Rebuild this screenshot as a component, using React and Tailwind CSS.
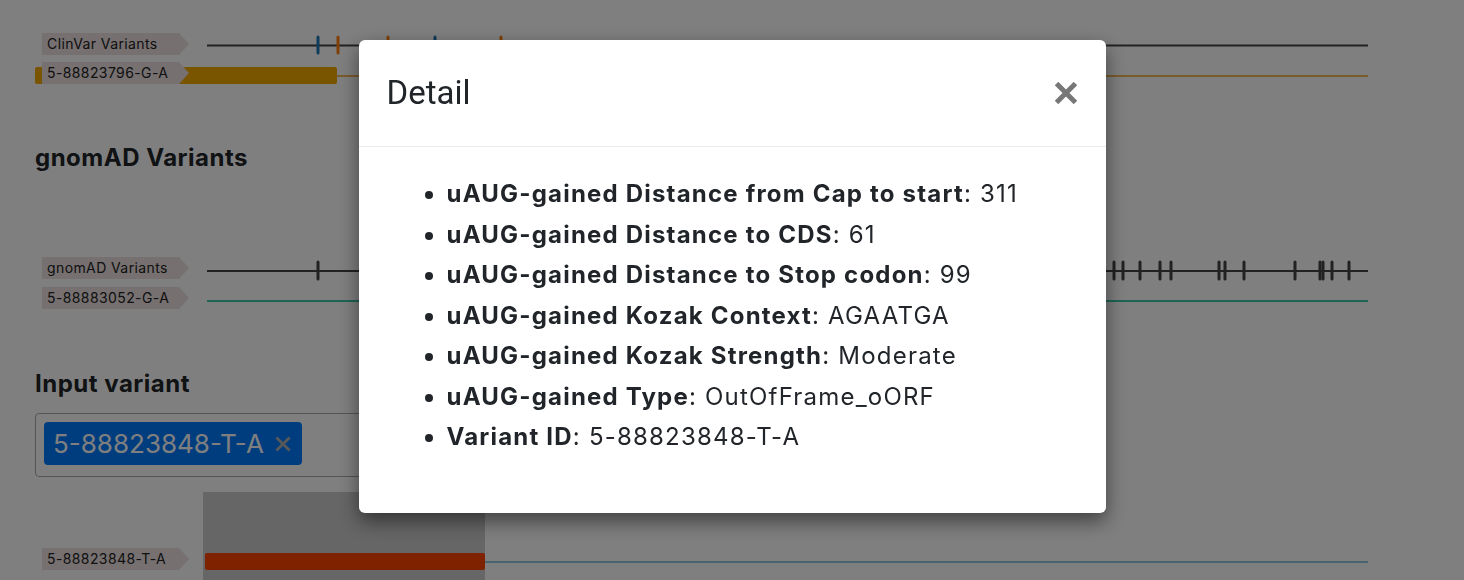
import React from 'react';

const tagShape = '[clip-path:polygon(0_0,calc(100%-10px)_0,100%_50%,calc(100%-10px)_100%,0_100%)]';

const Tag = ({ children, className }) => (
  <div className={`absolute left-[7px] w-[147px] h-[22px] bg-[#ece0e0] pl-[5px] text-[14px] tracking-[0.4px] leading-[22px] text-[#222] ${tagShape} ${className}`}>
    {children}
  </div>
);

const Tick = ({ x, y1, y2, color }) => (
  <line x1={x} x2={x} y1={y1} y2={y2} stroke={color} strokeWidth="3" strokeLinecap="round" />
);

const gnomadTicks = [283, 1079, 1088, 1105, 1125, 1136, 1184, 1190, 1209, 1260, 1285, 1288, 1297, 1314];

const details = [
  ['uAUG-gained Distance from Cap to start', '311'],
  ['uAUG-gained Distance to CDS', '61'],
  ['uAUG-gained Distance to Stop codon', '99'],
  ['uAUG-gained Kozak Context', 'AGAATGA'],
  ['uAUG-gained Kozak Strength', 'Moderate'],
  ['uAUG-gained Type', 'OutOfFrame_oORF'],
  ['Variant ID', '5-88823848-T-A'],
];

const XMark = ({ size, stroke, color }) => (
  <svg width={size} height={size} viewBox="0 0 20 20">
    <path d="M3 3 L17 17 M17 3 L3 17" stroke={color} strokeWidth={stroke} strokeLinecap="square" />
  </svg>
);

export default function App() {
  return (
    <div className="relative h-[580px] w-full overflow-hidden bg-white font-['Inter',sans-serif] text-[#212529]">
      <div className="pl-[35px]">
        {/* ClinVar track */}
        <div className="relative mt-[30px] h-[60px]">
          <svg width="1333" height="60" className="block">
            <line x1="172" x2="1333" y1="15.5" y2="15.5" stroke="#444" strokeWidth="2" />
            <Tick x={283} y1={7} y2={23} color="#1f77b4" />
            <Tick x={303} y1={7} y2={23} color="#ff7f0e" />
            <Tick x={353} y1={7} y2={23} color="#ff7f0e" />
            <Tick x={400} y1={7} y2={23} color="#1f77b4" />
            <Tick x={466} y1={7} y2={23} color="#ff7f0e" />
            <rect x="0" y="37" width="302" height="17" rx="2" fill="#f5aa00" />
            <line x1="302" x2="1333" y1="46" y2="46" stroke="#f0a020" strokeWidth="1.5" />
          </svg>
          <Tag className="top-[3px]">ClinVar Variants</Tag>
          <Tag className="top-[32px]">5-88823796-G-A</Tag>
        </div>

        <h2 className="mt-[53px] text-[24px] font-bold leading-[29px] tracking-[0.5px]">gnomAD Variants</h2>

        {/* gnomAD track */}
        <div className="relative mt-[78px] h-[66px]">
          <svg width="1333" height="66" className="block">
            <line x1="172" x2="1333" y1="21" y2="21" stroke="#444" strokeWidth="2" />
            {gnomadTicks.map(x => <Tick key={x} x={x} y1={12} y2={29} color="#444" />)}
            <line x1="172" x2="1333" y1="51" y2="51" stroke="#3cc8a8" strokeWidth="2" />
          </svg>
          <Tag className="top-[7px]">gnomAD Variants</Tag>
          <Tag className="top-[37px]">5-88883052-G-A</Tag>
        </div>

        <h2 className="mt-[53px] text-[24px] font-bold leading-[29px] tracking-[0.5px]">Input variant</h2>

        <div className="mt-[15px] flex h-[64px] w-[1000px] items-start rounded-[4px] border border-[#aaa] p-[8px]">
          <div className="flex h-[43px] w-[258px] items-center gap-[11px] rounded-[4px] bg-[#007bff] pl-[9px] text-[26px] text-white">
            <span>5-88823848-T-A</span>
            <XMark size={16} stroke={3.5} color="#b0b0b0" />
          </div>
        </div>

        {/* input variant track */}
        <div className="relative mt-[15px] h-[100px]">
          <svg width="1333" height="100" className="block">
            <rect x="168" y="0" width="282" height="100" fill="#ccc" />
            <rect x="170" y="61" width="280" height="17" rx="2" fill="#ff4400" />
            <line x1="450" x2="1333" y1="70" y2="70" stroke="#6ab8d8" strokeWidth="1.5" />
          </svg>
          <Tag className="top-[56px]">5-88823848-T-A</Tag>
        </div>
      </div>

      {/* modal */}
      <div className="fixed inset-0 flex justify-center bg-black/50">
        <div className="mt-[40px] h-fit w-[747px] rounded-[6px] bg-white shadow-[0_8px_20px_rgba(0,0,0,0.5)]">
          <div className="flex h-[107px] items-center justify-between border-b border-[#e9ecef] pl-[28px] pr-[29px]">
            <h4 className="font-['Roboto',sans-serif] text-[33px] font-normal text-[#212529]">Detail</h4>
            <XMark size={22} stroke={4.5} color="#777" />
          </div>
          <div className="pb-[55px] pl-[48px] pt-[27px]">
            <ul className="list-disc pl-[40px] text-[24px] leading-[40.5px] tracking-[1.2px]">
              {details.map(([k, v]) => (
                <li key={k}><b className="font-bold">{k}</b>: {v}</li>
              ))}
            </ul>
          </div>
        </div>
      </div>
    </div>
  );
}
